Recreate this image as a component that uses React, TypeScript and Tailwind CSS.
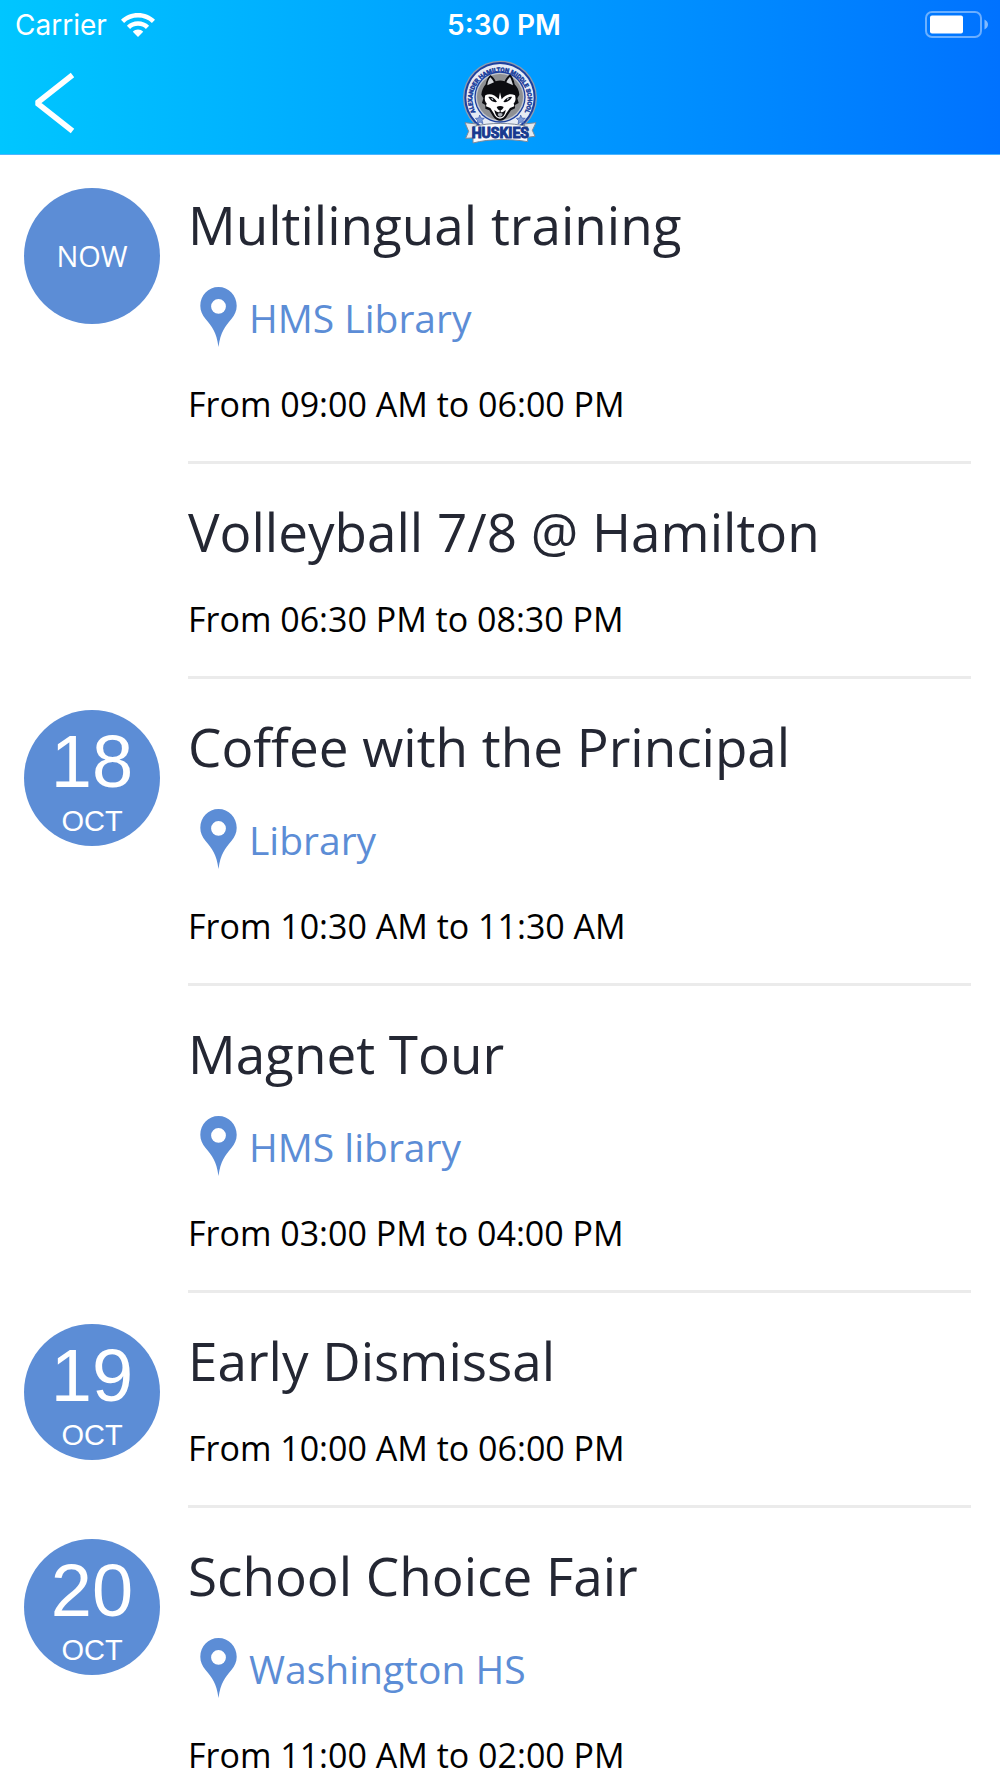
import { useId } from 'react';

interface SchoolEvent {
  title: string;
  location?: string;
  from: string;
  to: string;
  now?: boolean;
  day?: string;
  month?: string;
}

const events: SchoolEvent[] = [
  { title: 'Multilingual training', location: 'HMS Library', from: '09:00 AM', to: '06:00 PM', now: true },
  { title: 'Volleyball 7/8 @ Hamilton', from: '06:30 PM', to: '08:30 PM' },
  { title: 'Coffee with the Principal', location: 'Library', from: '10:30 AM', to: '11:30 AM', day: '18', month: 'OCT' },
  { title: 'Magnet Tour', location: 'HMS library', from: '03:00 PM', to: '04:00 PM' },
  { title: 'Early Dismissal', from: '10:00 AM', to: '06:00 PM', day: '19', month: 'OCT' },
  { title: 'School Choice Fair', location: 'Washington HS', from: '11:00 AM', to: '02:00 PM', day: '20', month: 'OCT' },
];

function WifiIcon() {
  return (
    <svg className="h-6 w-[34px]" viewBox="0 0 34 24" fill="white" aria-hidden="true">
      <path d="M17 0C10.400 0 4.400 2.500 0 6.700L3.100 9.900C6.700 6.500 11.600 4.500 17 4.500S27.300 6.500 30.900 9.900L34 6.700C29.600 2.500 23.600 0 17 0Z" />
      <path d="M17 8.300C12.700 8.300 8.800 10 5.900 12.800L9.100 16C11.100 14 13.900 12.800 17 12.800S22.900 14 24.900 16L28.100 12.800C25.200 10 21.300 8.300 17 8.300Z" />
      <path d="M17 16.500C15 16.500 13.200 17.300 11.800 18.700L17 24L22.200 18.700C20.800 17.300 19 16.500 17 16.500Z" />
    </svg>
  );
}

function BatteryIcon() {
  return (
    <svg className="h-7 w-16" viewBox="0 0 64 28" aria-label="Battery" role="img">
      <rect x="1" y="1" width="55" height="25" rx="6" fill="none" stroke="white" strokeOpacity="0.42" strokeWidth="2" />
      <rect x="5" y="4.500" width="33" height="18" rx="2" fill="white" />
      <path d="M59.500 8.500C61.500 9.500 63 11.200 63 13.500S61.500 17.500 59.500 18.500Z" fill="white" fillOpacity="0.5" />
    </svg>
  );
}

function PinIcon() {
  return (
    <svg className="h-[60px] w-[37px] shrink-0" viewBox="0 0 37 60" fill="#5c8dd6" aria-hidden="true">
      <path
        fillRule="evenodd"
        d="M18.500 0C8.300 0 0.300 8.200 0.300 18.800C0.300 24 2.300 28 5.600 32C12 39.500 16.500 45 18.500 60C20.500 45 25 39.500 31.400 32C34.700 28 36.700 24 36.700 18.800C36.700 8.200 28.700 0 18.500 0ZM18.500 12A7.400 7.400 0 1 1 18.500 26.800A7.400 7.400 0 1 1 18.500 12Z"
      />
    </svg>
  );
}

function SchoolLogo() {
  const arcId = useId();
  return (
    <svg className="h-[95px] w-[85px]" viewBox="8 0 255 285" role="img" aria-label="School logo">
      <defs>
        <path id={arcId} d="M66 181A83 83 0 1 1 202 181" />
      </defs>
      <circle cx="134" cy="128" r="111" fill="#8f9bad" />
      <circle cx="134" cy="128" r="107" fill="#1d409f" />
      <circle cx="134" cy="128" r="101" fill="#e6ebf4" />
      <text
        fill="#1c3f9c"
        stroke="#1c3f9c"
        strokeWidth="1.500"
        fontSize="18"
        fontWeight="700"
        fontFamily="Roboto, 'Liberation Sans', sans-serif"
      >
        <textPath href={`#${arcId}`} startOffset="50%" textAnchor="middle">
          ALEXANDER HAMILTON MIDDLE SCHOOL
        </textPath>
      </text>
      <circle cx="134" cy="126" r="77" fill="#1d409f" />
      <circle cx="134" cy="126" r="73" fill="#c3c8d0" />
      <circle cx="134" cy="126" r="69" fill="#8e9093" />
      {/* stars */}
      <g fill="#7e9ad6" stroke="#1d409f" strokeWidth="1.500">
        <path d="M73 180L77 189L87 190L80 196L83 206L74 201L65 207L67 197L60 190L70 189Z" />
        <path d="M196 180L200 189L210 190L203 196L206 206L197 201L188 207L190 197L183 190L193 189Z" />
      </g>
      {/* husky head */}
      <path
        fill="#0b0c10"
        d="M105 60C98 66 93 76 91 88C84 96 79 107 78 119L84 130L80 144L90 150L90 161L102 166L112 182C118 192 127 197 134 197C142 197 151 192 156 182L167 166L179 160L179 150L190 144L186 130L192 119C191 106 186 96 178 88C176 76 171 64 164 58C157 64 151 71 148 79C139 76 130 76 121 79C118 71 112 65 105 60Z"
      />
      <path fill="#d5d8dd" d="M105 67C99 74 97 82 96 91L116 82C113 76 109 71 105 67ZM164 66C159 71 155 76 153 82L173 91C171 82 168 73 164 66Z" />
      <path
        fill="white"
        d="M134 112L130 133C119 119 103 114 90 121C87 131 88 139 94 145L92 154L105 159L115 175C119 185 127 191 134 191C142 191 149 185 153 175L164 159L177 154L175 145C181 139 182 131 179 121C165 114 150 119 139 133Z"
      />
      <path fill="#0b0c10" d="M99 126C108 124 119 130 125 141C116 143 106 139 99 126ZM170 126C161 124 150 130 144 141C153 143 163 139 170 126Z" />
      <path fill="#dce8f8" d="M106 129L114 131L113 136ZM163 129L155 131L156 136Z" />
      <path fill="#0b0c10" d="M124 156C130 152 139 152 145 156C143 162 139 165 136 166V172C142 172 147 169 151 164C150 177 144 187 134 187S119 177 117 164C121 169 127 172 133 172V166C129 165 126 162 124 156Z" />
      <path fill="#aeb3bb" d="M127 176C132 173 138 173 142 176C141 182 138 185 134 185S128 182 127 176Z" />
      {/* banner */}
      <path fill="#e4e8ee" stroke="#7e8998" strokeWidth="3" d="M29 203L64 207V248L31 250L40 229ZM242 203L207 207V248L239 244L231 226Z" />
      <path fill="#f7f9fc" stroke="#7e8998" strokeWidth="3" d="M53 215C103 202 166 202 217 215V260C165 251 104 251 53 264Z" />
      <text
        x="135"
        y="249"
        textAnchor="middle"
        fill="#17398f"
        stroke="#17398f"
        strokeWidth="3"
        fontSize="42"
        fontWeight="700"
        fontFamily="Roboto, 'Liberation Sans', sans-serif"
      >
        HUSKIES
      </text>
    </svg>
  );
}

function Header() {
  return (
    <header className="shrink-0 border-b border-[#4db5ff] bg-linear-to-r from-[#00c6ff] to-[#0072ff] bg-origin-border pb-1">
      <div className="grid grid-cols-[1fr_auto_1fr] items-center pt-[9px] pr-[11px] pl-[15px] font-['Inter',sans-serif] text-[28px] leading-8 text-white">
        <div className="flex items-center gap-3.5">
          <span>Carrier</span>
          <WifiIcon />
        </div>
        <span className="pl-1 font-semibold">5:30 PM</span>
        <div className="flex justify-end">
          <BatteryIcon />
        </div>
      </div>
      <div className="grid grid-cols-[1fr_auto_1fr] items-center px-8 pt-3.5">
        <button type="button" aria-label="Back" className="w-12">
          <svg className="h-16 w-12" viewBox="0 0 48 64" fill="none" stroke="white" strokeWidth="5.500" strokeLinejoin="bevel">
            <path d="M40.500 4L5 32L40.500 60" />
          </svg>
        </button>
        <SchoolLogo />
      </div>
    </header>
  );
}

function DateBadge({ event }: { event: SchoolEvent }) {
  if (event.now) {
    return (
      <div className="flex size-34 items-center justify-center rounded-full bg-[#5c8dd6] text-[29px] text-white">
        NOW
      </div>
    );
  }
  if (!event.day) return null;
  return (
    <div className="flex size-34 flex-col items-center rounded-full bg-[#5c8dd6] pt-3 font-['Liberation_Sans',sans-serif] text-white">
      <span className="text-[74px] leading-[80px]">{event.day}</span>
      <span className="text-[29px] leading-[38px]">{event.month}</span>
    </div>
  );
}

function EventRow({ event }: { event: SchoolEvent }) {
  return (
    <li className="flex gap-7 pr-[29px] pl-6">
      <div className="w-34 shrink-0 pt-[31px]">
        <DateBadge event={event} />
      </div>
      <div className="min-w-0 flex-1 border-b-3 border-[#ebebeb] pt-8 pb-[34px]">
        <h2 className="text-[53px] leading-[72px] text-[#242733]">{event.title}</h2>
        {event.location && (
          <div className="mt-6 mb-8 flex h-16 items-center gap-3 pl-3 text-[39px] leading-[52px] text-[#5c8dd6]">
            <PinIcon />
            <span className="pt-0.5">{event.location}</span>
          </div>
        )}
        <p className="mt-7 text-[34px] leading-[46px] text-black">
          From {event.from} to {event.to}
        </p>
      </div>
    </li>
  );
}

export default function App() {
  return (
    <div className="flex h-screen flex-col bg-white font-['Open_Sans',sans-serif]">
      <Header />
      <main className="min-h-0 flex-1 overflow-y-auto pt-0.5 [scrollbar-width:none]">
        <ul>
          {events.map((event) => (
            <EventRow key={event.title} event={event} />
          ))}
        </ul>
      </main>
    </div>
  );
}
